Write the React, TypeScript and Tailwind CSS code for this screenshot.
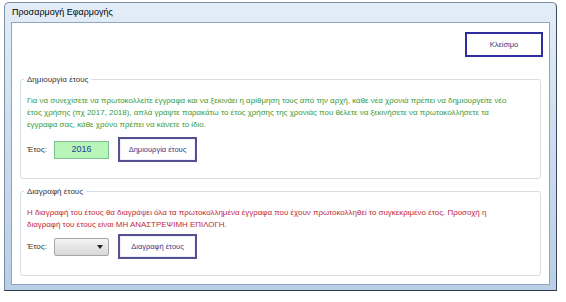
import React from 'react';

const font = { fontFamily: '"Liberation Sans", "DejaVu Sans", sans-serif' };

const GroupBox: React.FC<{ title: string; className: string; children: React.ReactNode }> = ({ title, className, children }) => (
  <div className={`relative mx-[8px] rounded-[3px] border border-[#d5dde5] bg-white px-[6px] ${className}`}>
    <span className="absolute left-[3px] top-[-6px] bg-white px-[3px] text-[8px] leading-[12px] text-[#333]">{title}</span>
    {children}
  </div>
);

const PurpleButton: React.FC<{ label: string }> = ({ label }) => (
  <button className="flex h-[25px] w-[79px] items-center justify-center border-2 border-[#55508f] bg-white text-[7.5px] text-[#2d3a8c] shadow-[inset_0_0_0_1px_#eeeeff]">
    {label}
  </button>
);

export default function App() {
  return (
    <div className="h-[302px] w-[566px] bg-white" style={font}>
      <div className="ml-[4px] pt-[2px]">
        {/* window frame */}
        <div className="flex h-[289px] w-[553px] flex-col rounded-t-[5px] border border-[#7b8fa6] border-b-[#2c3a4a] border-r-[#3a4a5c] bg-gradient-to-b from-[#e2edf8] via-[#ccdcee] to-[#b9cfe6] px-[6px] pb-[5px]">
          <div className="flex h-[19px] items-center px-[1px] text-[9px] text-black">Προσαρμογή Εφαρμογής</div>

          {/* client area */}
          <div className="flex flex-1 flex-col border border-[#8fa5bd] bg-white">
            <div className="flex justify-end pr-[6px] pt-[9px]">
              <button className="flex h-[25px] w-[78px] items-center justify-center border-2 border-[#2f2c9e] bg-white text-[7.5px] text-[#2d3a8c]">
                Κλείσιμο
              </button>
            </div>

            <div className="mt-[22px]">
              <GroupBox title="Δημιουργία έτους" className="pt-[15px] pb-[16px]">
                <p className="text-[7.95px] leading-[12px] text-[#3a9a3a]">
                  Για να συνεχίσετε να πρωτοκολλείτε έγγραφα και να ξεκινάει η αρίθμηση τους από την αρχή, κάθε νέα χρονιά πρέπει να δημιουργείτε νέο
                  <br />
                  έτος χρήσης (πχ 2017, 2018), απλά γράψτε παρακάτω το έτος χρήσης της χρονιάς που θέλετε να ξεκινήσετε να πρωτοκολλήσετε τα
                  <br />
                  έγγραφα σας, κάθε χρόνο πρέπει να κάνετε το ίδιο.
                </p>
                <div className="mt-[6px] flex items-center">
                  <span className="w-[27px] text-[8px] text-[#333]">Έτος:</span>
                  <div className="flex h-[18px] w-[55px] items-center justify-center border border-[#7fbf8f] bg-[#b8f5b8] text-[9px] text-[#1f3fa0]">
                    2016
                  </div>
                  <div className="ml-[9px]">
                    <PurpleButton label="Δημιουργία έτους" />
                  </div>
                </div>
              </GroupBox>
            </div>

            <div className="mt-[12px]">
              <GroupBox title="Διαγραφή έτους" className="pt-[15px] pb-[16px]">
                <p className="text-[7.95px] leading-[12px] text-[#c0283a]">
                  Η διαγραφή του έτους θα διαγράψει όλα τα πρωτοκολλημένα έγγραφα που έχουν πρωτοκολληθεί το συγκεκριμένο έτος. Προσοχή η
                  <br />
                  διαγραφή του έτους είναι ΜΗ ΑΝΑΣΤΡΕΨΙΜΗ ΕΠΙΛΟΓΗ.
                </p>
                <div className="mt-[3px] flex items-center">
                  <span className="w-[27px] text-[8px] text-[#333]">Έτος:</span>
                  <div className="flex h-[18px] w-[55px] items-center justify-end rounded-[2px] border border-[#a6a6a6] bg-gradient-to-b from-[#f4f4f4] to-[#d8d8d8] pr-[5px]">
                    <svg width="6" height="4" viewBox="0 0 6 4">
                      <path d="M0 0 H6 L3 4 Z" fill="#222" />
                    </svg>
                  </div>
                  <div className="ml-[9px]">
                    <PurpleButton label="Διαγραφή έτους" />
                  </div>
                </div>
              </GroupBox>
            </div>
          </div>
        </div>
      </div>
    </div>
  );
}
